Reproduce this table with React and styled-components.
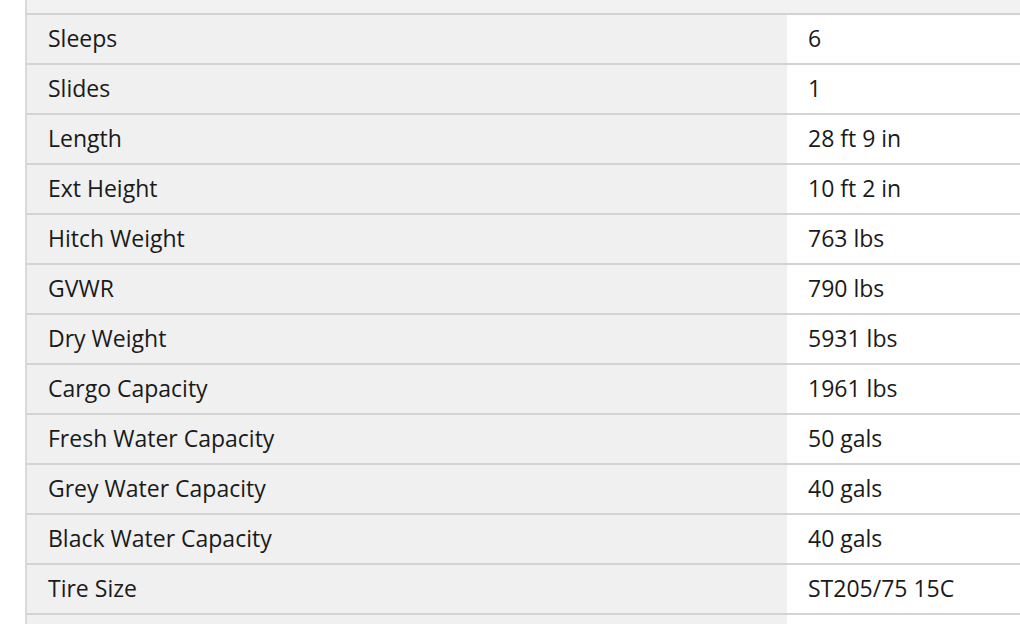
import React from "react";
import styled, { createGlobalStyle } from "styled-components";

const Global = createGlobalStyle`
  html, body { margin: 0; padding: 0; background: #ffffff; overflow: hidden; }
  body { font-family: "Open Sans", "Noto Sans", sans-serif; }
`;

const Page = styled.div`
  width: 1020px;
  height: 624px;
  overflow: hidden;
  padding-left: 25px;
  box-sizing: border-box;
`;

const Table = styled.div`
  border-left: 2px solid #d9d9d9;
  width: 1100px;
`;

const TopRow = styled.div`
  height: 13px;
  background: #f2f2f2;
`;

const Row = styled.div`
  display: grid;
  grid-template-columns: 760px 1fr;
  border-top: 2px solid #d3d3d3;
  height: 48px;
`;

const Cell = styled.div`
  display: flex;
  align-items: center;
  padding: 0 0 2px 21px;
  font-size: 23px;
  line-height: 1;
  color: #1a1a1a;
  background: ${(p) => (p.$label ? "#f0f0f0" : "#ffffff")};
  white-space: nowrap;
`;

const specs = [
  ["Sleeps", "6"],
  ["Slides", "1"],
  ["Length", "28 ft 9 in"],
  ["Ext Height", "10 ft 2 in"],
  ["Hitch Weight", "763 lbs"],
  ["GVWR", "790 lbs"],
  ["Dry Weight", "5931 lbs"],
  ["Cargo Capacity", "1961 lbs"],
  ["Fresh Water Capacity", "50 gals"],
  ["Grey Water Capacity", "40 gals"],
  ["Black Water Capacity", "40 gals"],
  ["Tire Size", "ST205/75 15C"],
  ["", ""],
];

export default function App() {
  return (
    <Page>
      <Global />
      <Table>
        <TopRow />
        {specs.map(([k, v], i) => (
          <Row key={i}>
            <Cell $label>{k}</Cell>
            <Cell>{v}</Cell>
          </Row>
        ))}
      </Table>
    </Page>
  );
}
